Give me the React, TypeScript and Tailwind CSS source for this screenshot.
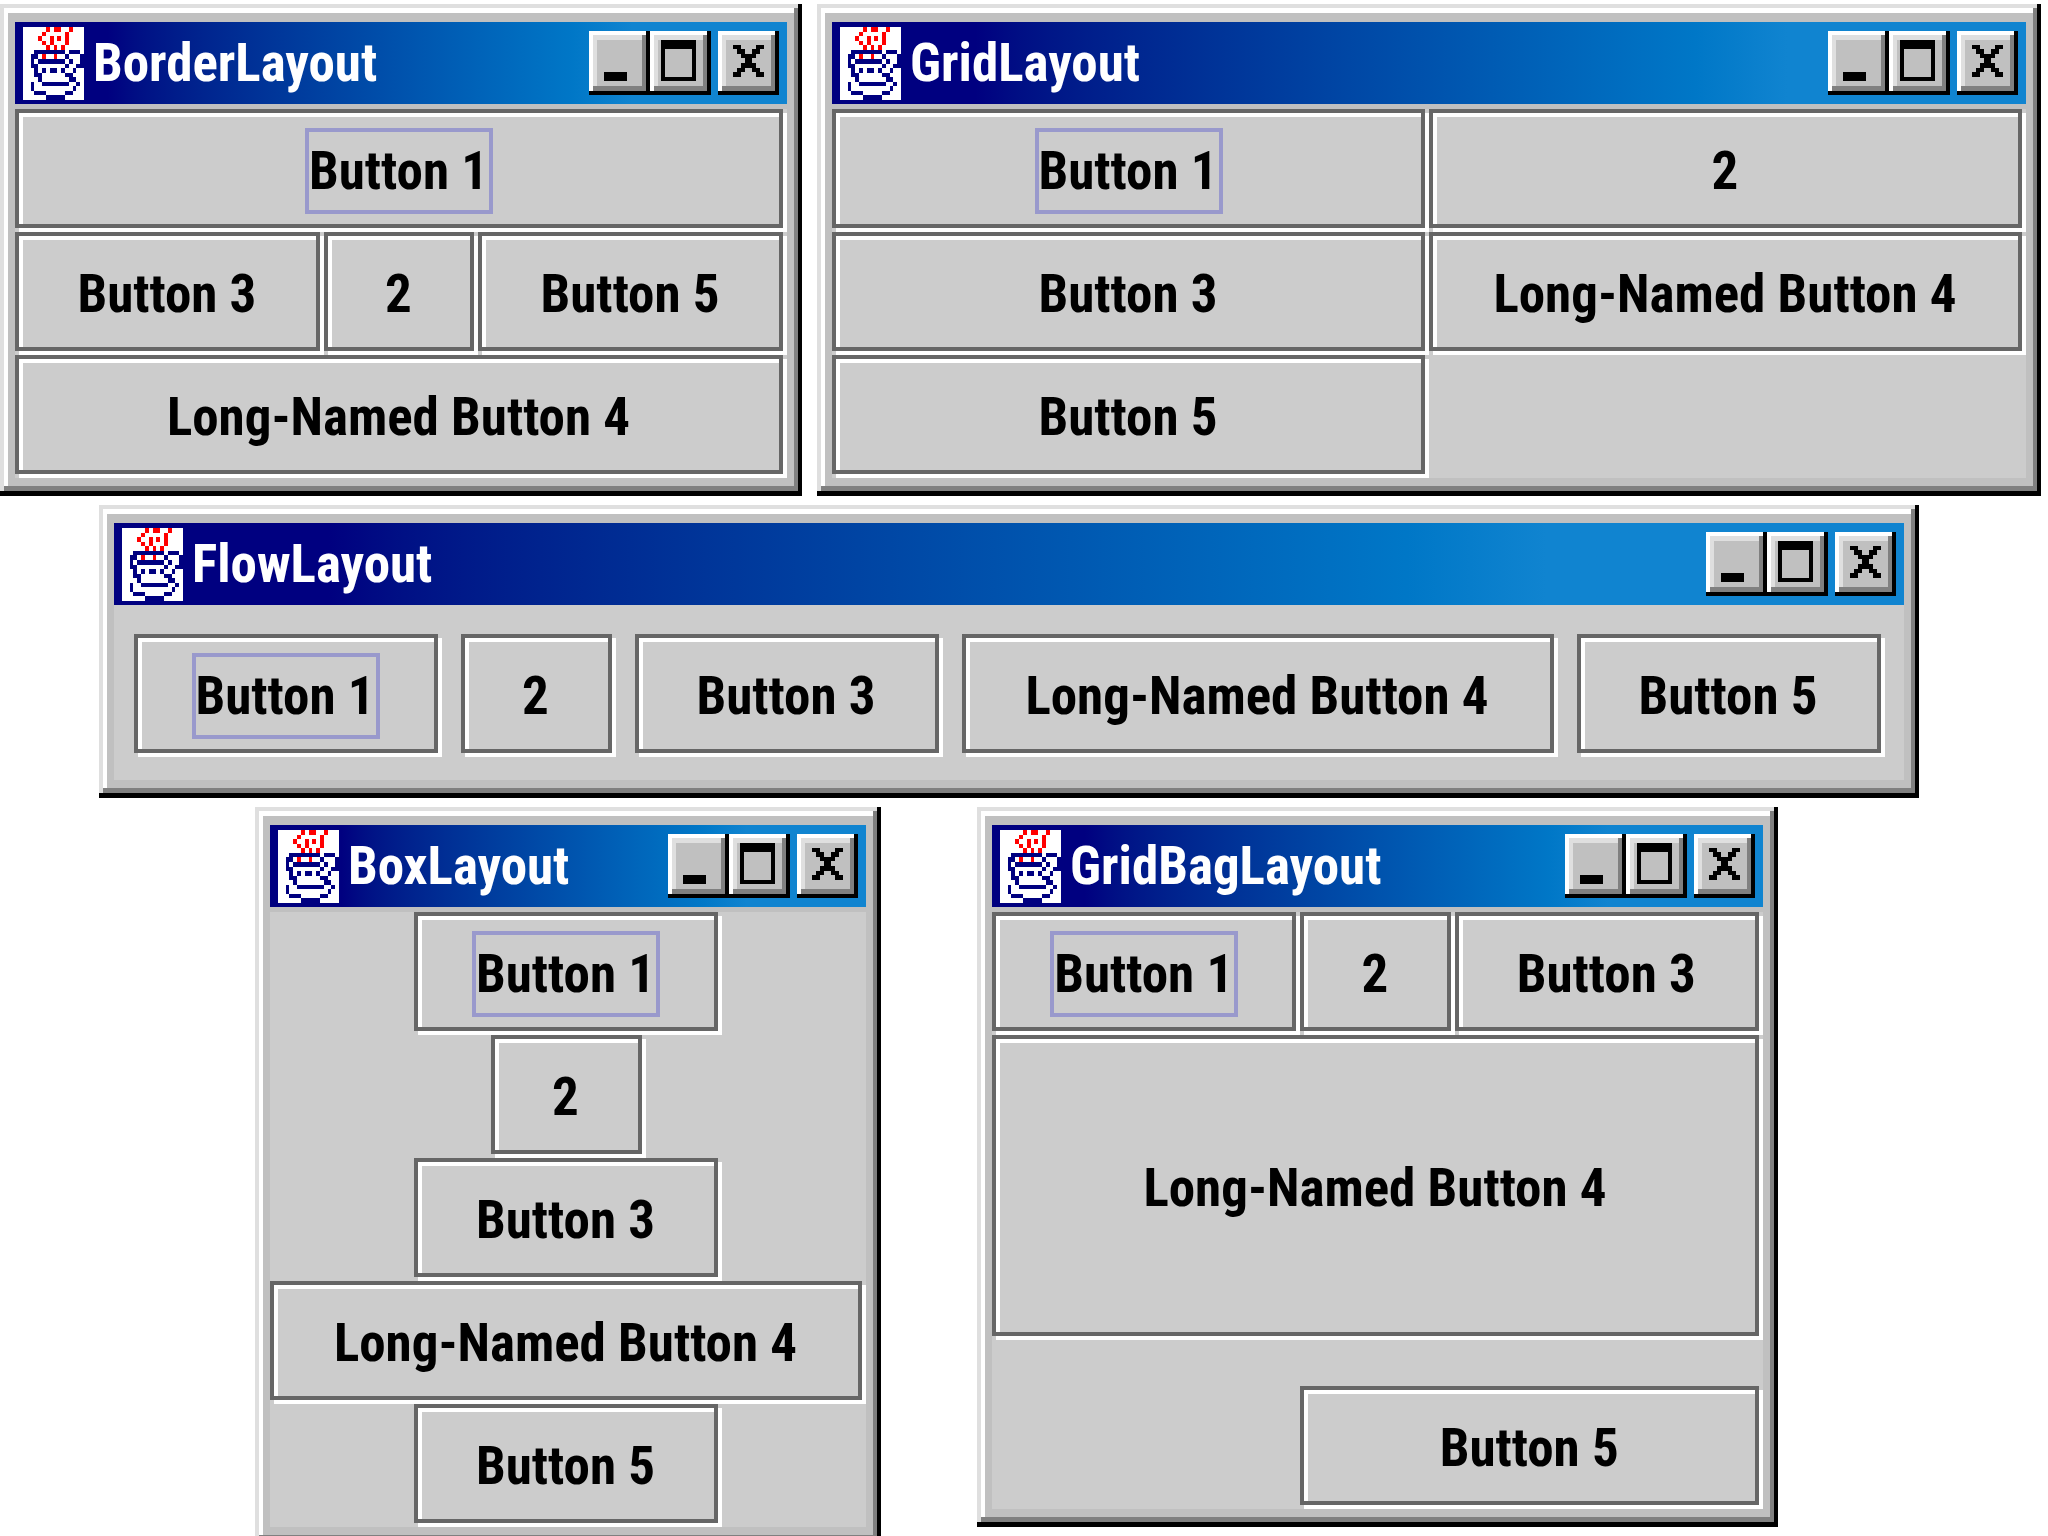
import type { ReactNode } from "react";
import clsx from "clsx";

// r = steam, b = cup, w = paper, . = see-through
const CUP = [
  "wwwwwwrwrrwwrwww",
  "wwwwwrwwwwwrwwww",
  "wwwwrwwrwrwrwwww",
  "wwwwwrwrwwwrwwww",
  "wwwwwwrwrwrwwwww",
  "wwwbbbbbbbbwbbbw",
  "wwbbwrwwrwwbwwwb",
  "wwbwbbbbbbbwbwwb",
  "wwbbwwwwwwwbwwbb",
  "wwwbwbwbbwbwwbww",
  "wwwbbwwwwwwbbwww",
  "wwwwbwwwwwwwbbww",
  "wwbwwbbbbbbbwwbw",
  "wwbwwwwwwwwwwbww",
  "wwwbbbwwwwwbbwww",
  "wwwwww.....wwwww",
];

const INK: Record<string, string> = { r: "#ff0000", b: "#000080", w: "#ffffff" };

function JavaIcon() {
  return (
    <svg
      viewBox="0 0 16 16"
      preserveAspectRatio="none"
      shapeRendering="crispEdges"
      className="ml-2 h-[73px] w-[61px] shrink-0"
      aria-hidden="true"
    >
      {CUP.map((row, y) =>
        row.split("").map((c, x) =>
          c === "." ? null : <rect key={`${x}-${y}`} x={x} y={y} width={1} height={1} fill={INK[c]} />
        )
      )}
    </svg>
  );
}

function CaptionButton({ label, d, className }: { label: string; d: string; className?: string }) {
  return (
    <button
      type="button"
      aria-label={label}
      className={clsx(
        "h-16 w-[61px] shrink-0 bg-[#c0c0c0] shadow-[inset_-4px_-4px_0_0_#000,inset_4px_4px_0_0_#fff,inset_-8px_-9px_0_0_#808080,inset_8px_9px_0_0_#dfdfdf]",
        className
      )}
    >
      <svg viewBox="0 0 16 14" preserveAspectRatio="none" shapeRendering="crispEdges" className="h-full w-full">
        <path d={d} fill="#000" fillRule="evenodd" />
      </svg>
    </button>
  );
}

const MINIMIZE = "M4 9h6v2H4z";
const MAXIMIZE = "M3 2h9v9H3z M4 4v6h7V4z";
const CLOSE =
  "M4 3h2v1h1v1h2V4h1V3h2v1h-1v1h-1v1H9v1h1v1h1v1h1v1h-2V9H9V8H7v1H6v1H4V9h1V8h1V7h1V6H6V5H5V4H4z";

function Frame({ title, className, children }: { title: string; className?: string; children: ReactNode }) {
  return (
    <section
      aria-label={title}
      className={clsx(
        "bg-[#c0c0c0] px-[15px] py-[18px] shadow-[inset_-4px_-5px_0_0_#000,inset_4px_4px_0_0_#dfdfdf,inset_-8px_-10px_0_0_#808080,inset_8px_9px_0_0_#fff]",
        className
      )}
    >
      <header className="flex h-[82px] items-center bg-linear-to-r from-[#000080] from-12% to-[#1084d0] to-80% pr-2">
        <JavaIcon />
        <h2 className="ml-[9px] flex-1 whitespace-nowrap text-[53px] font-bold leading-none text-white">{title}</h2>
        <CaptionButton label="Minimize" d={MINIMIZE} />
        <CaptionButton label="Maximize" d={MAXIMIZE} />
        <CaptionButton label="Close" d={CLOSE} className="ml-[7px]" />
      </header>
      {children}
    </section>
  );
}

// Etched border: a grey outline with a white one behind it, shifted down and right.
function JButton({ children, focused, className }: { children: ReactNode; focused?: boolean; className?: string }) {
  return (
    <button
      type="button"
      className={clsx(
        "mb-1 mr-1 flex min-h-[119px] items-center justify-center border-4 border-[#666] bg-[#ccc] pt-1 text-[53px] font-bold leading-none shadow-[4px_4px_0_0_#fff,inset_4px_4px_0_0_#fff]",
        className
      )}
    >
      <span
        className={clsx(
          "whitespace-nowrap border-4 pr-px leading-[78px]",
          focused ? "border-[#9999cc]" : "border-transparent"
        )}
      >
        {children}
      </span>
    </button>
  );
}

export default function App() {
  return (
    <main className="flex h-screen flex-col gap-[9px] overflow-hidden bg-white pt-1 font-['Roboto_Condensed','Liberation_Sans',sans-serif] text-black">
      <div className="flex shrink-0 gap-[15px] pr-[7px]">
        <Frame title="BorderLayout" className="w-[802px]">
          <div className="mt-[5px] grid grid-cols-[2fr_1fr_2fr] bg-[#ccc]">
            <JButton focused className="col-span-3">Button 1</JButton>
            <JButton>Button 3</JButton>
            <JButton>2</JButton>
            <JButton>Button 5</JButton>
            <JButton className="col-span-3">Long-Named Button 4</JButton>
          </div>
        </Frame>

        <Frame title="GridLayout" className="flex-1">
          <div className="mt-[5px] grid grid-cols-2 bg-[#ccc]">
            <JButton focused>Button 1</JButton>
            <JButton>2</JButton>
            <JButton>Button 3</JButton>
            <JButton>Long-Named Button 4</JButton>
            <JButton>Button 5</JButton>
          </div>
        </Frame>
      </div>

      <Frame title="FlowLayout" className="ml-[99px] w-[1820px] shrink-0">
        <div className="flex justify-center gap-[19px] bg-[#ccc] pb-[23px] pt-[29px]">
          <JButton focused className="w-[304px]">Button 1</JButton>
          <JButton className="w-[151px]">2</JButton>
          <JButton className="w-[304px]">Button 3</JButton>
          <JButton className="w-[592px]">Long-Named Button 4</JButton>
          <JButton className="w-[304px]">Button 5</JButton>
        </div>
      </Frame>

      <div className="ml-[255px] flex shrink-0 items-start gap-24">
        <Frame title="BoxLayout" className="w-[626px]">
          <div className="mt-[5px] flex flex-col items-center bg-[#ccc]">
            <JButton focused className="w-[304px]">Button 1</JButton>
            <JButton className="w-[151px]">2</JButton>
            <JButton className="w-[304px]">Button 3</JButton>
            <JButton className="w-[592px]">Long-Named Button 4</JButton>
            <JButton className="w-[304px]">Button 5</JButton>
          </div>
        </Frame>

        <Frame title="GridBagLayout" className="w-[801px]">
          <div className="mt-[5px] grid grid-cols-[2fr_1fr_2fr] bg-[#ccc]">
            <JButton focused>Button 1</JButton>
            <JButton>2</JButton>
            <JButton>Button 3</JButton>
            <JButton className="col-span-3 h-[301px]">Long-Named Button 4</JButton>
            <JButton className="col-span-2 col-start-2 mt-[46px]">Button 5</JButton>
          </div>
        </Frame>
      </div>
    </main>
  );
}
